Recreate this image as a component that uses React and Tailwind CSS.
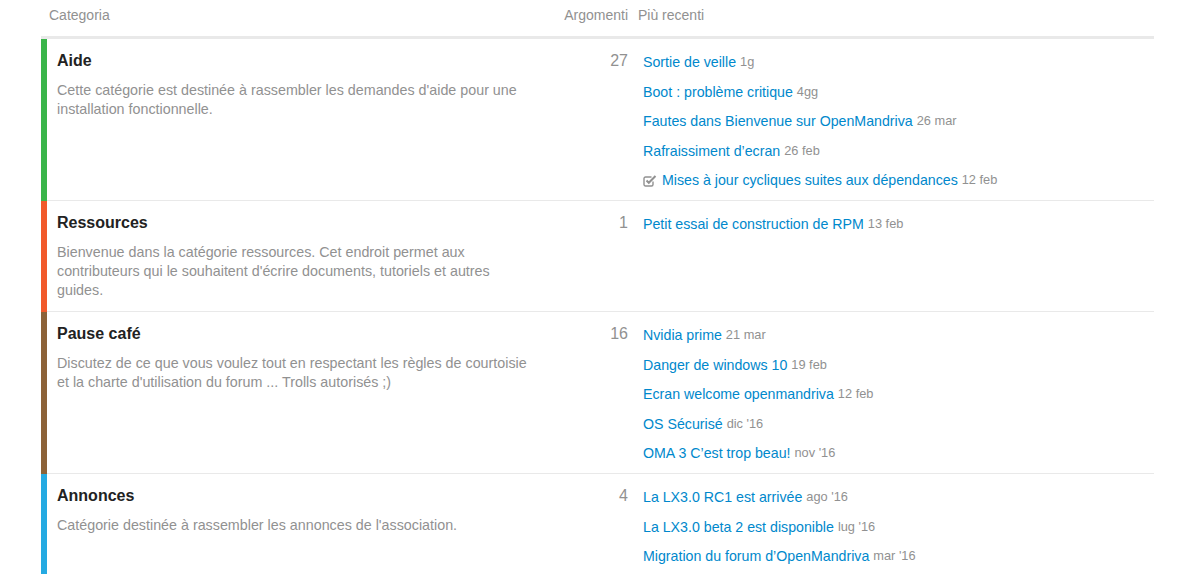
import React from 'react';

const categories = [
  {
    name: 'Aide',
    color: 'border-[#3AB54A]',
    description: "Cette catégorie est destinée à rassembler les demandes d'aide pour une installation fonctionnelle.",
    count: 27,
    topics: [
      { title: 'Sortie de veille', date: '1g' },
      { title: 'Boot : problème critique', date: '4gg' },
      { title: 'Fautes dans Bienvenue sur OpenMandriva', date: '26 mar' },
      { title: 'Rafraissiment d’ecran', date: '26 feb' },
      { title: 'Mises à jour cycliques suites aux dépendances', date: '12 feb', solved: true },
    ],
  },
  {
    name: 'Ressources',
    color: 'border-[#F1592A]',
    description: "Bienvenue dans la catégorie ressources. Cet endroit permet aux contributeurs qui le souhaitent d'écrire documents, tutoriels et autres guides.",
    count: 1,
    topics: [{ title: 'Petit essai de construction de RPM', date: '13 feb' }],
  },
  {
    name: 'Pause café',
    color: 'border-[#8C6238]',
    description: "Discutez de ce que vous voulez tout en respectant les règles de courtoisie et la charte d'utilisation du forum ... Trolls autorisés ;)",
    count: 16,
    topics: [
      { title: 'Nvidia prime', date: '21 mar' },
      { title: 'Danger de windows 10', date: '19 feb' },
      { title: 'Ecran welcome openmandriva', date: '12 feb' },
      { title: 'OS Sécurisé', date: "dic '16" },
      { title: 'OMA 3 C’est trop beau!', date: "nov '16" },
    ],
  },
  {
    name: 'Annonces',
    color: 'border-[#25AAE2]',
    description: "Catégorie destinée à rassembler les annonces de l'association.",
    count: 4,
    topics: [
      { title: 'La LX3.0 RC1 est arrivée', date: "ago '16" },
      { title: 'La LX3.0 beta 2 est disponible', date: "lug '16" },
      { title: 'Migration du forum d’OpenMandriva', date: "mar '16" },
    ],
  },
];

const SolvedIcon = () => (
  <svg width="14" height="13" viewBox="0 0 14 13" className="mr-[5px] shrink-0">
    {/* square outline */}
    <path d="M10 7.5v3a1.5 1.5 0 0 1-1.5 1.5h-6A1.5 1.5 0 0 1 1 10.5v-6A1.5 1.5 0 0 1 2.5 3h6" fill="none" stroke="#919191" strokeWidth="1.4" />
    {/* check mark */}
    <path d="M3.5 6.5l2.3 2.3L12.5 2" fill="none" stroke="#919191" strokeWidth="2" />
  </svg>
);

const CategoryRow = ({ category, last }) => (
  <div className={`flex border-l-[6px] ${category.color}`}>
    <div className={`flex flex-1 ${last ? '' : 'border-b border-[#e9e9e9]'}`}>
      <div className="w-[513px] shrink-0 pl-[10px] pt-[12px] pb-[11px]">
        <h3 className="text-[16px] leading-[20px] font-bold text-[#222222]">{category.name}</h3>
        <p className="mt-[10px] w-[473px] text-[14.3px] leading-[19px] text-[#919191]">{category.description}</p>
      </div>
      <div className="w-[68px] shrink-0 pt-[12px] text-right text-[16px] leading-[20px] text-[#919191]">
        {category.count}
      </div>
      <div className="flex-1 pl-[15px] pt-[13px] pb-[10px]">
        <ul className="flex flex-col gap-[9.5px]">
          {category.topics.map((topic) => (
            <li key={topic.title} className="flex items-center leading-[20px] whitespace-nowrap">
              {topic.solved && <SolvedIcon />}
              <a href="#" className="text-[14.2px] text-[#0088cc]">{topic.title}</a>
              <span className="ml-[4px] text-[12.8px] text-[#919191]">{topic.date}</span>
            </li>
          ))}
        </ul>
      </div>
    </div>
  </div>
);

export default function App() {
  return (
    <div className="min-h-[574px] bg-white pl-[41px]" style={{ fontFamily: '"Liberation Sans", Arial, sans-serif' }}>
      <div className="w-[1113px]">
        {/* table header */}
        <div className="flex h-[39px] border-b-[3px] border-[#e9e9e9] text-[14px] leading-[20px] text-[#919191]">
          <div className="w-[519px] shrink-0 pl-[8px] pt-[5px]">Categoria</div>
          <div className="w-[68px] shrink-0 pt-[5px] text-right">Argomenti</div>
          <div className="flex-1 pl-[10px] pt-[5px]">Più recenti</div>
        </div>
        {categories.map((category, i) => (
          <CategoryRow key={category.name} category={category} last={i === categories.length - 1} />
        ))}
      </div>
    </div>
  );
}
